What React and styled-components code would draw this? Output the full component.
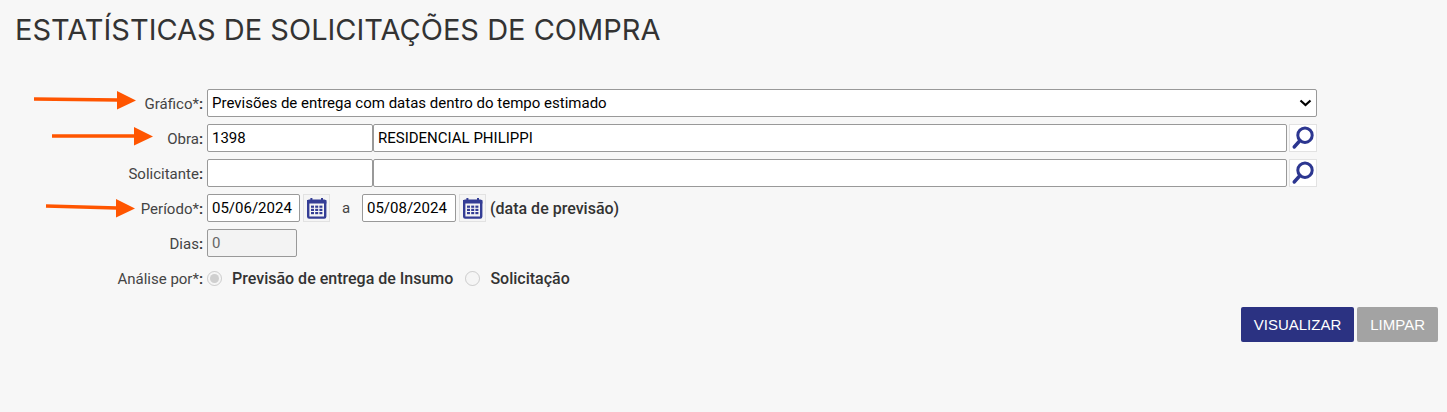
import { useState } from "react"
import styled, { createGlobalStyle } from "styled-components"

const GlobalStyle = createGlobalStyle`
  * {
    box-sizing: border-box;
  }

  body {
    margin: 0;
    background: #f7f7f7;
    color: #444;
    font-family: Roboto, "Liberation Sans", sans-serif;
    font-size: 15px;
  }
`

const Page = styled.main`
  position: relative;
  padding: 10px 9px 40px 15px;
`

const Title = styled.h1`
  margin: 0 0 39px;
  color: #333;
  font-family: Inter, sans-serif;
  font-size: 29px;
  font-weight: 400;
  line-height: 40px;
`

const Form = styled.form`
  display: flex;
  flex-direction: column;
  gap: 7px;
`

const Row = styled.div`
  display: grid;
  grid-template-columns: 188px 1fr;
  column-gap: 4px;
  align-items: center;
  height: 28px;
  padding-right: 121px;
`

const Label = styled.label`
  padding-top: 2px;
  text-align: right;
  line-height: 20px;
`

const Colon = styled.span`
  color: #333;
  font-weight: 600;
`

const Fields = styled.div`
  display: flex;
  align-items: center;
  min-width: 0;
`

const Input = styled.input`
  flex: ${({ $width }) => ($width ? "none" : "1")};
  width: ${({ $width }) => $width || "auto"};
  min-width: 0;
  height: 28px;
  padding: 0 4px;
  border: 1px solid #999;
  border-radius: 2px;
  background: #fff;
  color: #000;
  font: inherit;

  &:disabled {
    background: #f3f3f3;
    color: #666;
  }
`

const SelectBox = styled.div`
  display: grid;
  flex: 1;
  align-items: center;

  > * {
    grid-area: 1 / 1;
  }

  svg {
    justify-self: end;
    margin-right: 5px;
    pointer-events: none;
  }
`

const Select = styled.select`
  width: 100%;
  height: 28px;
  padding: 0 24px 0 4px;
  border: 1px solid #999;
  border-radius: 2px;
  background: #fff;
  color: #000;
  font: inherit;
  appearance: none;
`

const IconButton = styled.button`
  display: flex;
  flex: none;
  align-items: center;
  justify-content: center;
  width: ${({ $plain }) => ($plain ? "27px" : "28px")};
  height: 28px;
  margin-left: ${({ $plain }) => ($plain ? "3px" : "2px")};
  padding: 0;
  border: 1px solid #e2e2e2;
  background: ${({ $plain }) => ($plain ? "#f5f5f5" : "#fff")};
  cursor: pointer;
`

const Separator = styled.span`
  width: 32px;
  text-align: center;
`

const Note = styled.span`
  margin-left: 4px;
  color: #333;
  font-size: 16px;
  font-weight: 500;
`

const Option = styled.label`
  display: flex;
  align-items: center;
  gap: 10px;
  margin-right: 12px;
  color: #333;
  font-size: 16px;
  font-weight: 500;
`

const Radio = styled.input`
  width: 15px;
  height: 15px;
  margin: 0;
`

const Actions = styled.div`
  display: flex;
  justify-content: flex-end;
  gap: 3px;
  margin-top: 8px;
`

const Button = styled.button`
  height: 35px;
  padding: 0 13px;
  border: 0;
  border-radius: 2px;
  background: ${({ $muted }) => ($muted ? "#a3a3a3" : "#2b3282")};
  color: #fff;
  font-family: "Liberation Sans", Arial, sans-serif;
  font-size: 15px;
  cursor: pointer;
`

const Arrows = styled.svg`
  position: absolute;
  top: 0;
  left: 0;
  pointer-events: none;
`

function SearchIcon() {
  return (
    <svg width="26" height="26" viewBox="0 0 26 26" fill="none" stroke="#2c3690" aria-hidden="true">
      <circle cx="15" cy="10.2" r="7.2" strokeWidth="3" />
      <path d="M10 15.5 L4.2 22" strokeWidth="3.4" strokeLinecap="round" />
    </svg>
  )
}

function CalendarIcon() {
  return (
    <svg width="25" height="26" viewBox="0 0 25 26" fill="#343d95" aria-hidden="true">
      <rect x="4.2" y="5.8" width="17" height="16.8" rx="1" fill="none" stroke="#343d95" strokeWidth="2.4" />
      <path d="M3 5h19.4v3.4H3zM6.4 3h2v4h-2zM17 3h2v4h-2z" />
      {[10.6, 13.8, 17].map((y) =>
        [7, 11.2, 15.4].map((x) => <rect key={`${x}-${y}`} x={x} y={y} width="3" height="2.2" />)
      )}
    </svg>
  )
}

function FieldLabel({ htmlFor, text }) {
  return (
    <Label htmlFor={htmlFor}>
      {text}<Colon>:</Colon>
    </Label>
  )
}

function Lookup({ id, label, code, name }) {
  return (
    <Row>
      <FieldLabel htmlFor={id} text={label} />
      <Fields>
        <Input id={id} $width="166px" defaultValue={code} />
        <Input aria-label={`Nome: ${label}`} defaultValue={name} />
        <IconButton type="button" aria-label={`Pesquisar ${label}`}>
          <SearchIcon />
        </IconButton>
      </Fields>
    </Row>
  )
}

function App() {
  const [analise, setAnalise] = useState("insumo")

  return (
    <>
      <GlobalStyle />
      <Page>
        <Title>ESTATÍSTICAS DE SOLICITAÇÕES DE COMPRA</Title>
        <Form onSubmit={(e) => e.preventDefault()}>
          <Row>
            <FieldLabel htmlFor="grafico" text="Gráfico*" />
            <Fields>
              <SelectBox>
                <Select id="grafico">
                  <option>Previsões de entrega com datas dentro do tempo estimado</option>
                </Select>
                <svg width="13" height="8" viewBox="0 0 13 8" fill="none" aria-hidden="true">
                  <path d="M1.5 1.5 L6.5 6 L11.5 1.5" stroke="#000" strokeWidth="2.2" />
                </svg>
              </SelectBox>
            </Fields>
          </Row>
          <Lookup id="obra" label="Obra" code="1398" name="RESIDENCIAL PHILIPPI" />
          <Lookup id="solicitante" label="Solicitante" code="" name="" />
          <Row>
            <FieldLabel htmlFor="inicio" text="Período*" />
            <Fields>
              <Input id="inicio" $width="93px" defaultValue="05/06/2024" />
              <IconButton type="button" $plain aria-label="Data inicial">
                <CalendarIcon />
              </IconButton>
              <Separator>a</Separator>
              <Input aria-label="Data final" $width="94px" defaultValue="05/08/2024" />
              <IconButton type="button" $plain aria-label="Escolher data final">
                <CalendarIcon />
              </IconButton>
              <Note>(data de previsão)</Note>
            </Fields>
          </Row>
          <Row>
            <FieldLabel htmlFor="dias" text="Dias" />
            <Fields>
              <Input id="dias" $width="90px" defaultValue="0" disabled />
            </Fields>
          </Row>
          <Row>
            <FieldLabel htmlFor="insumo" text="Análise por*" />
            <Fields>
              <Option>
                <Radio id="insumo" type="radio" name="analise" disabled checked={analise === "insumo"} onChange={() => setAnalise("insumo")} />
                Previsão de entrega de Insumo
              </Option>
              <Option>
                <Radio type="radio" name="analise" disabled checked={analise === "solicitacao"} onChange={() => setAnalise("solicitacao")} />
                Solicitação
              </Option>
            </Fields>
          </Row>
          <Actions>
            <Button type="submit">VISUALIZAR</Button>
            <Button type="reset" $muted>LIMPAR</Button>
          </Actions>
        </Form>
        <Arrows width="160" height="220" viewBox="0 0 160 220" fill="#ff5500" stroke="#ff5500" aria-hidden="true">
          <path d="M34 99 L118 100 M52 136 H135 M46 206 L117 208" strokeWidth="3.6" />
          <path d="M117 91 L136 100.5 L117 109.5z M134 127 L153 136.5 L134 145.5z M116 199 L135 208.5 L116 217.5z" stroke="none" />
        </Arrows>
      </Page>
    </>
  )
}

export default App
